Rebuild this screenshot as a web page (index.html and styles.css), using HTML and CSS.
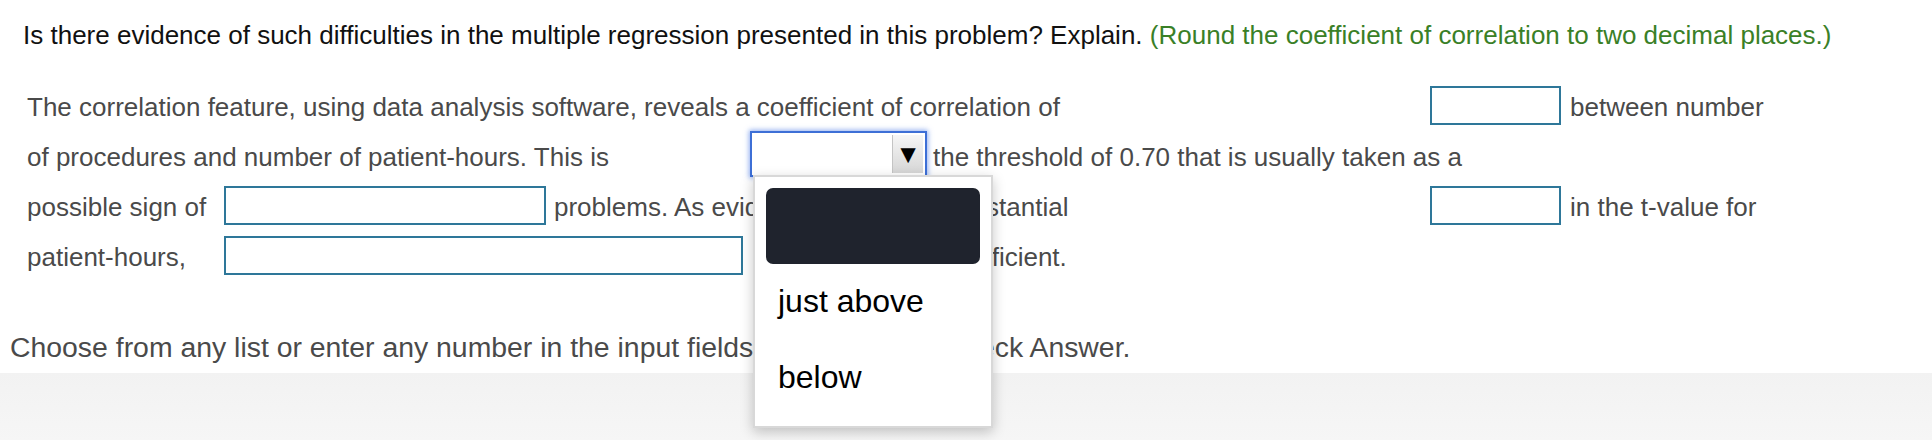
FILE: index.html
```html
<!DOCTYPE html>
<html lang="en">
<head>
<meta charset="UTF-8">
<meta name="viewport" content="width=device-width, initial-scale=1.0">
<title>Multiple Regression Question</title>
<link rel="stylesheet" href="styles.css">
</head>
<body>

<div class="question">
    <p class="prompt">Is there evidence of such difficulties in the multiple regression presented in this problem? Explain. <span class="hint">(Round the coefficient of correlation to two decimal places.)</span></p>

    <div class="answer">
        <div class="row">
            <span class="lead-1">The correlation feature, using data analysis software, reveals a coefficient of correlation of</span>
            <input class="box box-sm" type="text">
            <span>between number</span>
        </div>
        <div class="row">
            <span class="lead-2">of procedures and number of patient-hours. This is</span>
            <div class="select">
                <span class="select-value"></span>
                <span class="select-btn">&#9660;</span>
                <ul class="menu">
                    <li class="menu-item active"></li>
                    <li class="menu-item">just above</li>
                    <li class="menu-item">below</li>
                </ul>
            </div>
            <span>the threshold of 0.70 that is usually taken as a</span>
        </div>
        <div class="row">
            <span class="label">possible sign of</span>
            <input class="box box-md" type="text">
            <span class="mid">problems. As evidence, there is a substantial</span>
            <input class="box box-sm" type="text">
            <span>in the t-value for</span>
        </div>
        <div class="row">
            <span class="label">patient-hours,</span>
            <input class="box box-lg" type="text">
            <span>the regression coefficient.</span>
        </div>
    </div>

    <p class="footnote">Choose from any list or enter any number in the input fields and then click Check Answer.</p>
</div>

<div class="footer"></div>

</body>
</html>
```

FILE: styles.css
```css
* {
    box-sizing: border-box;
}
body {
    margin: 0;
    font-family: 'Liberation Sans', Arial, sans-serif;
    background: #fff;
    color: #4a4a4a;
}
.prompt {
    margin: 20px 0 0 23px;
    font-size: 26px;
    line-height: 30px;
    color: #111;
}
.prompt .hint {
    color: #3a8027;
}
.answer {
    margin-top: 32px;
    padding-left: 27px;
    font-size: 26px;
}
.answer .row {
    display: flex;
    align-items: center;
    height: 50px;
    white-space: nowrap;
}
.answer .lead-1 {
    width: 1403px;
}
.answer .lead-2 {
    width: 723px;
}
.answer .label {
    width: 197px;
}
.answer .mid {
    width: 876px;
    overflow: hidden;
}
.box {
    height: 39px;
    margin: -4px 8px 0 0;
    border: 2px solid #2e7799;
    background: #fff;
    font: inherit;
    padding: 0 6px;
}
.box-sm {
    width: 131px;
    margin-right: 9px;
}
.box-md {
    width: 322px;
}
.box-lg {
    width: 519px;
    margin-right: 28px;
}

/* select with open list */
.select {
    position: relative;
    display: flex;
    width: 177px;
    height: 46px;
    margin: -6px 6px 0 0;
    border: 2px solid #3d6fd6;
    box-shadow: 0 0 5px 1px rgba(70, 120, 230, 0.6);
    background: #fff;
}
.select-value {
    flex: 1;
}
.select-btn {
    width: 31px;
    margin: 2px 2px 2px 0;
    border-left: 1px solid #c4c4c4;
    background: linear-gradient(#f6f6f6, #d6d6d6);
    color: #000;
    font-size: 26px;
    display: flex;
    align-items: center;
    justify-content: center;
}
.menu {
    position: absolute;
    left: 1px;
    top: 42px;
    width: 240px;
    margin: 0;
    padding: 11px 11px 10px;
    list-style: none;
    background: #fff;
    border: 2px solid #d8d8d8;
    box-shadow: 0 4px 12px rgba(0, 0, 0, 0.22);
    z-index: 5;
}
.menu-item {
    height: 76px;
    line-height: 74px;
    padding-left: 12px;
    font-size: 32px;
    color: #000;
    border-radius: 7px;
}
.menu-item.active {
    background: #1f232d;
}

.footnote {
    margin: 40px 0 0 10px;
    font-size: 28.4px;
    line-height: 51px;
    color: #4a4a4a;
}
.footer {
    height: 68px;
    background: linear-gradient(#f2f2f2, #f6f6f6);
}
```
